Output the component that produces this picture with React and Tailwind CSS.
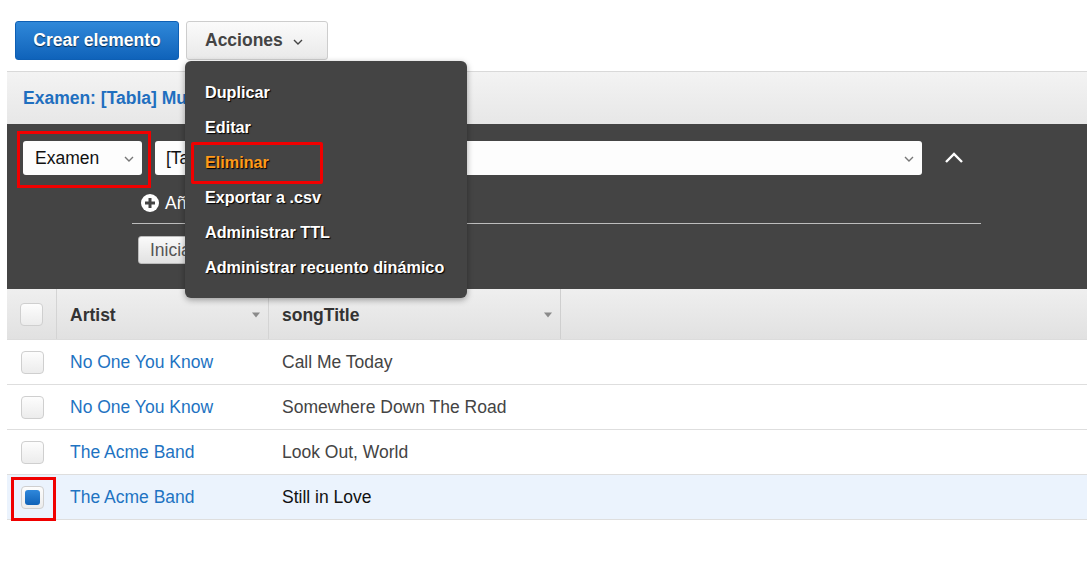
import React from "react";

const Chev = ({ className = "" }) => (
  <svg width="10" height="6" viewBox="0 0 10 6" className={className}>
    <path d="M1 1 L5 5 L9 1" fill="none" stroke="currentColor" strokeWidth="1.4" />
  </svg>
);

const SortTri = () => (
  <svg width="10" height="6" viewBox="0 0 10 6">
    <path d="M1 0.5 L9 0.5 L5 5.5 Z" fill="#8a8a8a" />
  </svg>
);

const Checkbox = ({ checked }) => (
  <div className="w-[23px] h-[23px] rounded-[4px] border border-[#cfcfcf] bg-gradient-to-b from-[#fdfdfd] to-[#ececec] flex items-center justify-center">
    {checked && (
      <div className="w-[15px] h-[15px] rounded-[3px] bg-gradient-to-b from-[#2f88db] to-[#0f62b8]" />
    )}
  </div>
);

const rows = [
  { a: "No One You Know", s: "Call Me Today" },
  { a: "No One You Know", s: "Somewhere Down The Road" },
  { a: "The Acme Band", s: "Look Out, World" },
  { a: "The Acme Band", s: "Still in Love", sel: true },
];

export default function App() {
  return (
    <div
      className="relative w-full h-[567px] bg-white overflow-hidden"
      style={{ fontFamily: '"Liberation Sans", Arial, sans-serif' }}
    >
      {/* top buttons */}
      <div className="flex gap-[7px] pt-[21px] pl-[15px]">
        <button className="h-[39px] w-[164px] rounded-[3px] border border-[#0e5fb4] bg-gradient-to-b from-[#2f88d9] to-[#0f63ba] text-white font-bold text-[17.5px] [text-shadow:0_1px_1px_rgba(0,0,0,0.6)]">
          Crear elemento
        </button>
        <button className="h-[39px] w-[142px] rounded-[3px] border border-[#cdcdcd] bg-gradient-to-b from-[#fbfbfb] to-[#e9e9e9] text-[#444] font-bold text-[17.5px] flex items-center gap-[10px] pl-[18px]">
          <span>Acciones</span>
          <Chev className="text-[#444] mt-[3px]" />
        </button>
      </div>

      <div className="ml-[7px] mt-[11px]">
        {/* title bar */}
        <div className="h-[53px] border-t border-[#d9d9d9] bg-gradient-to-b from-[#f3f3f3] to-[#e7e7e7] flex items-center pl-[16px] pt-[1px]">
          <span className="text-[#1f6fbf] font-bold text-[17.5px]">Examen: [Tabla] Music</span>
        </div>

        {/* dark panel */}
        <div className="h-[165px] bg-[#444444] pt-[17px]">
          <div className="flex items-center pl-[16px]">
            <div className="w-[119px] h-[34px] rounded-[3px] bg-[#fdfdfd] flex items-center justify-between pl-[12px] pr-[8px] pt-[1px] text-[17.5px] text-[#111]">
              <span>Examen</span>
              <Chev className="text-[#777]" />
            </div>
            <div className="ml-[13px] w-[767px] h-[34px] rounded-[3px] bg-[#fdfdfd] flex items-center justify-between pl-[11px] pr-[8px] pt-[1px] text-[17.5px] text-[#111]">
              <span>[Tabla] Music</span>
              <Chev className="text-[#777]" />
            </div>
            <svg width="20" height="12" viewBox="0 0 20 12" className="ml-[22px]">
              <path d="M2 10 L10 2 L18 10" fill="none" stroke="white" strokeWidth="2.4" />
            </svg>
          </div>
          <div className="ml-[134px] mt-[15px] flex items-center gap-[6px] text-white text-[17.5px]">
            <svg width="18" height="18" viewBox="0 0 18 18">
              <circle cx="9" cy="9" r="9" fill="white" />
              <path d="M9 4 V14 M4 9 H14" stroke="#444" strokeWidth="3" />
            </svg>
            <span>Añadir filtro</span>
          </div>
          <div className="ml-[125px] mt-[7px] w-[849px] h-px bg-[#bdbdbd]" />
          <div className="ml-[131px] mt-[12px]">
            <button className="h-[28px] px-[11px] rounded-[3px] border border-[#bbb] bg-gradient-to-b from-[#fafafa] to-[#e2e2e2] text-[#555] text-[17.5px]">
              Iniciar búsqueda
            </button>
          </div>
        </div>

        {/* table */}
        <div>
          <div className="flex h-[51px] bg-gradient-to-b from-[#efefef] to-[#e1e1e1] border-b border-[#dcdcdc]">
            <div className="w-[50px] flex items-center justify-center border-r border-[#d4d4d4]">
              <Checkbox />
            </div>
            <div className="w-[212px] flex items-center justify-between pl-[13px] pr-[7px] pt-[2px] border-r border-[#d4d4d4] font-bold text-[17.5px] text-[#333]">
              <span>Artist</span>
              <SortTri />
            </div>
            <div className="w-[292px] flex items-center justify-between pl-[13px] pr-[7px] pt-[2px] border-r border-[#cfcfcf] font-bold text-[17.5px] text-[#333]">
              <span>songTitle</span>
              <SortTri />
            </div>
            <div className="flex-1" />
          </div>
          {rows.map((r, i) => (
            <div
              key={i}
              className={`flex h-[45px] border-b border-[#dedede] items-center pt-[1px] text-[17.5px] ${r.sel ? "bg-[#ebf3fd]" : "bg-white"}`}
            >
              <div className="w-[50px] flex items-center justify-center">
                <Checkbox checked={r.sel} />
              </div>
              <div className="w-[212px] pl-[13px] text-[#1e73c2]">{r.a}</div>
              <div className={`pl-[13px] ${r.sel ? "text-[#111]" : "text-[#444]"}`}>{r.s}</div>
            </div>
          ))}
        </div>
      </div>

      {/* annotation boxes */}
      <div className="absolute left-[17px] top-[131px] w-[134px] h-[57px] border-[3px] border-[#f00000]" />
      <div className="absolute left-[11px] top-[477px] w-[45px] h-[44px] border-[3px] border-[#f00000]" />

      {/* dropdown menu */}
      <div className="absolute left-[185px] top-[61px] w-[282px] h-[237px] rounded-[6px] bg-[#444444] shadow-[0_2px_6px_rgba(0,0,0,0.35)] pt-[14px] pl-[20px]">
        {["Duplicar", "Editar", "Eliminar", "Exportar a .csv", "Administrar TTL", "Administrar recuento dinámico"].map((t) => (
          <div
            key={t}
            className={`h-[35px] flex items-center font-bold text-[16.2px] [text-shadow:1px_1px_1px_#000] ${t === "Eliminar" ? "text-[#ff9a1a]" : "text-white"}`}
          >
            {t}
          </div>
        ))}
      </div>
      <div className="absolute left-[191px] top-[142px] w-[132px] h-[42px] border-[3px] border-[#f00000] rounded-[2px]" />
    </div>
  );
}
